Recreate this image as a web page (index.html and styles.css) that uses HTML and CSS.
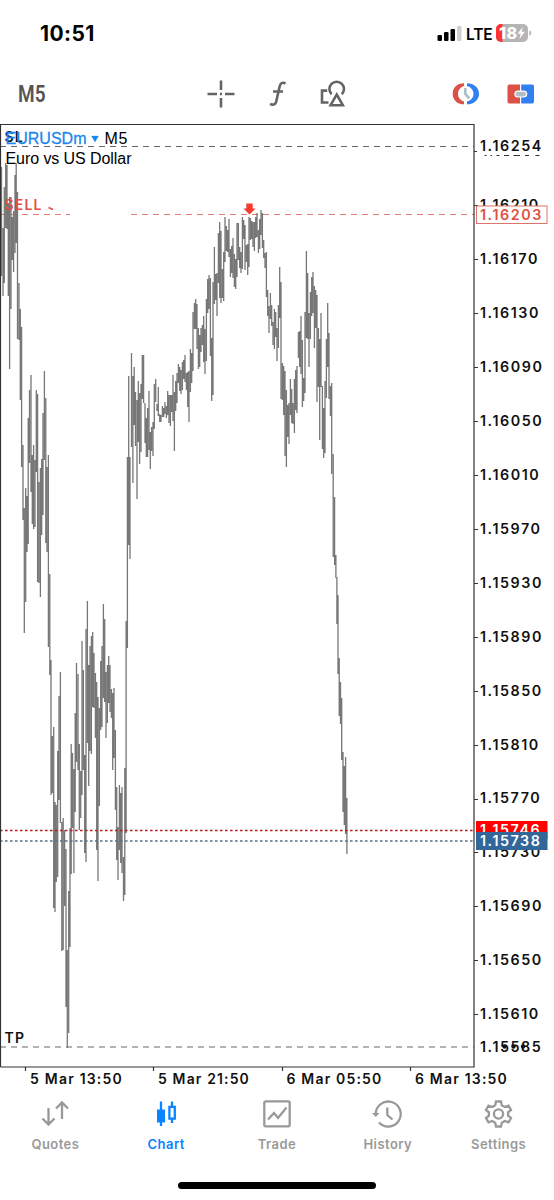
FILE: index.html
```
<!DOCTYPE html>
<html lang="en">
<head>
  <meta charset="UTF-8" />
  <meta name="viewport" content="width=device-width, initial-scale=1.0">
  <title>EURUSDm M5</title>
  <link rel="stylesheet" href="styles.css">
</head>
<body>
  <div class="status-bar">
    <span class="time">10:51</span>
    <div class="status-icons">
      <svg width="26" height="18" viewBox="0 0 26 18">
        <rect x="0.5" y="11" width="4.5" height="6" rx="1.2" />
        <rect x="7" y="8" width="4.5" height="9" rx="1.2" />
        <rect x="13.5" y="5" width="4.5" height="12" rx="1.2" />
        <rect x="20" y="2" width="4.5" height="15" rx="1.2" fill="#cfcfcf" />
      </svg>
      <span class="network">LTE</span>
      <svg width="36" height="18" viewBox="0 0 36 18">
        <rect width="32" height="18" rx="5" fill="#b5b5b5" />
        <path d="M5 0H6.5V18H5A5 5 0 0 1 0 13V5A5 5 0 0 1 5 0Z" fill="#ff3333" />
        <path d="M33.3 6.2Q35.4 7 35.4 9T33.3 11.8Z" fill="#b5b5b5" />
        <text class="battery-level" x="3" y="14.8" textLength="18">18</text>
        <path d="M26.8 3L21.5 9.8H24.8L23.4 15L29 7.8H25.6Z" fill="#fff" />
      </svg>
    </div>
  </div>

  <div class="toolbar">
    <span class="timeframe">M5</span>
    <svg class="tool crosshair" width="28" height="28" viewBox="0 0 28 28">
      <path d="M14 .5V10M14 18V27.5M.5 14H10M18 14H27.5M13 14H15" />
    </svg>
    <svg class="tool function" width="20" height="28" viewBox="0 0 20 28">
      <path d="M17.5 3.5C14 1.5 12.200 3.500 11.500 7L8.500 20.500C7.800 24.500 5.500 25.500 2 24M5 11.500H15" />
    </svg>
    <svg class="tool objects" width="28" height="28" viewBox="0 0 28 28">
      <path d="M12.600 14.200A7.300 7.300 0 1 1 22.800 14.200M8.200 10.600H3V22.500H9.500M17.700 14.500L23.800 25.200H11.600Z" />
    </svg>
    <svg class="tool session" width="28" height="24" viewBox="0 0 28 24">
      <path d="M12 1.2C5 1.2.7 5.5.7 11.7S5 22.3 12 22.3V19.6C8.5 18.5 6 15.5 6 11.8S8.5 5 12 4Z" fill="#dc5145" />
      <path d="M15 1.2C22 1.2 27 5.5 27 11.7S22 22.3 15 22.3V19.6C19 18.5 21.5 15.5 21.5 11.8S19 5 15 4Z" fill="#317ff0" />
      <path d="M13.3 6V12L17.3 16.3" fill="none" stroke="#aebdc7" stroke-width="2.6" />
    </svg>
    <svg class="tool order" width="28" height="20" viewBox="0 0 28 20">
      <path d="M2.3.5H13V6.5H11Q7.3 6.5 7.3 10T11 13.5H13V19.5H2.3Q.5 19.5.5 17.7V2.3Q.5.5 2.3.5Z" fill="#dc5145" />
      <path d="M14.2.5H25.2Q27 .5 27 2.3V17.7Q27 19.5 25.2 19.5H14.2V13.5H16.5Q20.3 13.5 20.3 10T16.5 6.5H14.2Z" fill="#317ff0" />
      <rect x="8.5" y="7.7" width="10.5" height="4.8" rx="2.4" fill="#aebdc7" />
    </svg>
  </div>

  <!-- user units are page pixels, the box starts at y=122 -->
  <svg class="chart" width="554" height="966" viewBox="0 122 554 966">
    <g class="level">
      <path d="M0 146.500H474M0 1047H474" />
      <path class="sell" d="M0 214.500H70M131 214.500H474" />
    </g>
    <path class="bars" d="M1.500 167V276M3 228V296M4.300 187V283M5.700 163V228M7 165V229M8.300 203V296M9.600 197V369M11 197V309M12.300 217V260M13.600 211V272M15 175V253M16.200 163V243M17.500 192V339M19 283V340M20.300 309V400M21.600 327V467M23 445V520M24.300 508V633M25.700 488V602M27 496V552M28.200 418V544M29.500 390V463M31 375V492M32.300 455V524M33.600 445V529M35 460V527M36.300 390V472M37.600 394V582M39 482V583M40.400 468V597M41.700 459V535M43 413V515M44.400 371V460M45.800 398V543M47 467V552M48.400 455V647M49.800 574V675M51 660V795M52.300 736V793M53.700 727V908M55 802V912M56.300 805V882M57.700 751V877M59 696V800M60.400 672V823M61.800 822V951M63.200 818V950M64.600 830V906M66 849V1007M67.300 950V1048M68.700 891V1033M70 828V947M71.200 744V874M72.500 753V828M73.900 769V873M75.200 713V812M76.500 663V762M78 674V770M79.300 744V830M80.700 771V818M82 641V795M83.400 670V770M84.700 755V853M86 629V862M87.400 601V743M88.700 665V786M90 646V751M91.400 636V754M92.700 632V707M94 653V708M95.400 673V738M96.700 682V850M98 697V881M99.400 708V806M100.700 661V730M102 646V727M103.400 604V698M104.700 619V702M106 672V738M107.400 665V723M108.700 656V703M110 665V712M111.400 689V718M112.700 693V770M114 688V758M115.400 730V810M116.700 787V860M118 827V880M119.400 785V850M120.700 793V863M122 787V873M123.500 857V901M124.800 768V895M126.100 621V833M127.400 457V648M128.700 376V545M130 457V559M131.500 353V447M132.900 376V483M134.200 367V425M135.500 392V446M137 400V499M138.300 381V442M139.600 393V464M141 384V452M142.300 355V399M143.600 355V403M145 403V443M146.300 418V457M147.600 408V457M149 391V450M150.300 432V469M151.600 427V451M153 422V456M154.300 384V429M155.700 379V402M157 404V411M158.300 387V416M159.700 414V422M161 415V422M162.400 406V417M163.700 408V417M165 402V414M166.400 406V418M167.700 391V415M169 395V423M170.400 395V426M171.700 395V412M173 375V421M174.400 392V451M175.700 381V411M177 373V403M178.400 364V383M179.700 367V391M181 370V394M182.400 362V390M183.700 360V379M185 355V382M186.400 373V390M187.700 372V407M189 371V422M190.400 349V392M191.700 353V383M193 312V371M194.400 303V329M195.700 299V329M197 304V349M198.400 328V369M199.700 335V367M201 328V352M202.400 325V345M203.700 316V362M205 329V374M206.400 299V361M207.700 279V313M209 275V309M210.400 278V356M211.700 338V401M213 282V395M214.400 247V304M215.700 274V300M217 273V316M218.400 233V283M219.700 222V298M221 231V303M222.400 269V298M223.700 252V301M225 217V262M226.400 226V251M227.700 230V252M229 219V257M230.400 249V277M231.700 246V273M233 238V278M234.400 254V287M235.700 259V289M237 223V277M238.400 223V260M239.700 247V268M241 252V273M242.400 217V269M243.700 220V239M245 225V270M246.400 245V262M247.700 244V275M249 217V267M250.400 218V240M251.700 221V239M253 222V247M254.400 222V251M255.700 217V238M257 213V237M258.400 230V253M259.700 219V249M261 210V235M262.400 213V248M263.700 240V258M265 253V268M266.400 252V297M267.700 290V316M269 306V333M270.400 293V319M271.700 305V326M273 322V345M274.400 309V349M275.700 312V337M277 328V361M278.400 305V348M279.700 267V318M281 282V399M282.400 363V400M283.700 366V415M285 371V456M286.400 390V467M287.700 405V437M289 403V444M290.400 379V415M291.700 389V423M293 403V424M294.400 379V433M295.700 370V410M297 366V413M298.400 332V358M299.700 331V367M301 316V374M302.400 340V407M303.700 378V401M305 312V393M306.400 251V338M307.700 273V339M309 313V367M310.400 292V339M311.700 277V316M313 272V313M314.400 286V348M315.700 290V328M317 295V402M318.400 328V387M319.700 339V440M321 313V387M322.400 386V449M323.700 408V458M325 381V453M326.400 339V398M327.700 303V367M329 333V399M330.400 386V416M331.700 383V474M333.200 454V557M334.600 497V565M335.900 555V578M336.900 577V624M338 595V674M339.200 658V716M340.500 682V724M341.700 698V760M343 752V812M344.300 766V825M345.600 757V834M346.900 798V854" />
    <path class="last ask" d="M0 830.500H474" />
    <path class="last bid" d="M0 841H474" />

    <path class="frame" d="M.5 1067V124.500H474V1067H.500" />
    <path class="ticks" d="M474 151.500h3M474 205.500h4M474 259.500h4M474 313.500h4M474 367.500h4M474 421.500h4M474 475.500h4M474 529.500h4M474 583.500h4M474 637.500h4M474 691.500h4M474 745.500h4M474 799.500h4M474 852.500h4M474 906.500h4M474 960.500h4M474 1014.500h4M25.500 1067v4M153.500 1067v4M282.500 1067v4M410.500 1067v4" />

    <path class="arrow" d="M246.300 203.500H252.700V208.500H255.500L249.500 214.500L243.500 208.500H246.300Z" />

    <g class="label">
      <text x="4.500" y="142">SL</text>
      <text x="4.500" y="1042.500">TP</text>
      <text class="sell" x="4.500" y="210">SELL</text>
      <path class="sell-rest" d="M48.500 207.500L53 209.500" />
    </g>
    <g class="title">
      <text class="symbol" x="5.500" y="143.500" textLength="81">EURUSDm</text>
      <path class="symbol" d="M91.500 136H98.500L95 142Z" />
      <text x="104.500" y="143.500" textLength="23">M5</text>
      <text x="5.500" y="163.500" textLength="126">Euro vs US Dollar</text>
    </g>

    <g class="label price">
      <text x="480" y="210">1.16210</text>
      <text x="480" y="264">1.16170</text>
      <text x="480" y="318">1.16130</text>
      <text x="480" y="372">1.16090</text>
      <text x="480" y="426">1.16050</text>
      <text x="480" y="480">1.16010</text>
      <text x="480" y="534">1.15970</text>
      <text x="480" y="588">1.15930</text>
      <text x="480" y="642">1.15890</text>
      <text x="480" y="696">1.15850</text>
      <text x="480" y="750">1.15810</text>
      <text x="480" y="803">1.15770</text>
      <text x="480" y="857">1.15730</text>
      <text x="480" y="911">1.15690</text>
      <text x="480" y="965">1.15650</text>
      <text x="480" y="1019">1.15610</text>
      <text x="480" y="1052">1.15585</text>
      <circle cx="504.500" cy="1046.500" r="2.200" />
      <circle cx="513.500" cy="1046.500" r="2.200" />
      <circle cx="523" cy="1046.500" r="2.200" />
      <text x="480" y="151">1.16254</text>
      <path class="covered" d="M484.500 155.500h2M490.500 155.500h1.500M496.500 155.500h3M504 155.500h5M513.500 155.500h6.500M525 155.500h4M535.500 155.500h4" />

      <rect class="sell-box" x="476.500" y="206" width="70.500" height="17.500" />
      <text class="sell" x="480" y="219.500">1.16203</text>
      <rect class="ask-box" x="476" y="821" width="71.500" height="18" />
      <text class="on-box" x="480" y="835">1.15746</text>
      <rect class="bid-box" x="476" y="832" width="71.500" height="18" />
      <text class="on-box" x="480" y="846">1.15738</text>
    </g>

    <g class="label date">
      <text x="30" y="1083.500" textLength="93">5 Mar 13:50</text>
      <text x="158" y="1083.500" textLength="92">5 Mar 21:50</text>
      <text x="286.500" y="1083.500" textLength="96">6 Mar 05:50</text>
      <text x="415" y="1083.500" textLength="93">6 Mar 13:50</text>
    </g>
  </svg>

  <nav class="tab-bar">
    <a class="tab">
      <svg width="30" height="30" viewBox="0 0 30 30">
        <path d="M8.500 8V24M2.500 18.500L8.500 24.500L14.500 18.500M22 19V3M16 8.500L22 2.500L28 8.500" />
      </svg>
      <span>Quotes</span>
    </a>
    <a class="tab active">
      <svg width="30" height="30" viewBox="0 0 30 30">
        <path d="M10 1.500V26M21 1.500V7M21 18V23" />
        <rect class="solid" x="6" y="9.500" width="8" height="13" />
        <rect x="18.400" y="6.900" width="5.400" height="11.700" />
      </svg>
      <span>Chart</span>
    </a>
    <a class="tab">
      <svg width="30" height="30" viewBox="0 0 30 30">
        <rect x="2.300" y="1.300" width="25.400" height="25" rx="1.500" />
        <path d="M6 19.500L12 13L16 18L24.500 7.500" />
      </svg>
      <span>Trade</span>
    </a>
    <a class="tab">
      <svg width="30" height="30" viewBox="0 0 30 30">
        <path d="M2.700 14A12.500 12.500 0 1 1 6 22.500M14.300 7.500V15L19.500 19.500" />
        <path class="solid" d="M-1 13L6.500 13L2.700 17Z" />
      </svg>
      <span>History</span>
    </a>
    <a class="tab">
      <svg width="30" height="30" viewBox="0 0 30 30">
        <path d="M12 1.500H17L17.800 5.300L20.800 7L24.500 5.700L27 10L24.100 12.400V15.600L27 18L24.500 22.300L20.800 21L17.800 22.700L17 26.500H12L11.200 22.700L8.200 21L4.500 22.300L2 18L4.900 15.600V12.400L2 10L4.500 5.700L8.200 7L11.200 5.300Z" />
        <circle cx="14.500" cy="14" r="4.600" />
      </svg>
      <span>Settings</span>
    </a>
  </nav>
  <div class="home-indicator"></div>
</body>
</html>
```
FILE: styles.css
```
:root {
  --blue: #0a84ff;
  --red: #e0503f;
  --gray: #999;
  --icon: #646464;
}

* {
  box-sizing: border-box;
}

body {
  margin: 0;
  width: 554px;
  height: 1200px;
  background: #fff;
  color: #000;
  font-family: Inter, "Liberation Sans", sans-serif;
  overflow: hidden;
}

svg {
  display: block;
  flex: none;
  overflow: visible;
}

.status-bar {
  display: flex;
  justify-content: space-between;
  align-items: center;
  height: 66px;
  padding: 0 22px 0 40px;
}

.time {
  font-size: 21px;
  font-weight: 700;
  letter-spacing: 0.4px;
}

.status-icons {
  display: flex;
  align-items: center;
}

.network {
  margin: 2px 5px 0 3px;
  font-size: 15.5px;
  font-weight: 600;
  width: 25px;
  letter-spacing: -0.2px;
}

.battery-level {
  font-size: 16px;
  font-weight: 800;
  fill: #fff;
}

.toolbar {
  display: flex;
  align-items: center;
  height: 56px;
  padding-left: 18px;
}

.timeframe {
  width: 189px;
  font-family: Roboto, sans-serif;
  font-size: 23.5px;
  font-weight: 600;
  color: #555;
  transform: scaleX(0.81);
  transform-origin: left;
}

.crosshair,
.function,
.objects {
  fill: none;
  stroke: var(--icon);
  stroke-width: 2.6;
}

.function {
  margin-left: 33px;
}

.objects {
  margin-left: 31px;
}

.session {
  margin-left: 105px;
}

.order {
  margin-left: 27px;
}

.level {
  fill: none;
  stroke: #666;
  stroke-width: 1;
  stroke-dasharray: 6 5;
}

.level .sell {
  stroke: #df7b73;
}

.bars {
  fill: none;
  stroke: #777;
  stroke-width: 1.3;
}

.last {
  fill: none;
  stroke-width: 1.5;
  stroke-dasharray: 2.6 2.4;
}

.ask {
  stroke: #b81f27;
}

.bid {
  stroke: #5d7186;
}

.frame,
.ticks {
  fill: none;
  stroke: #333;
  stroke-width: 1.2;
}

.arrow {
  fill: #f43d2f;
}

.label {
  font-size: 14px;
  font-weight: 600;
  letter-spacing: 1.2px;
  fill: #111;
}

.price {
  font-size: 14.3px;
  letter-spacing: 1.55px;
}

.label .sell {
  fill: var(--red);
}

.sell-rest {
  stroke: var(--red);
  stroke-width: 1.5;
}

.title {
  font-family: "Liberation Sans", Arial, sans-serif;
  font-size: 16px;
}

.symbol {
  fill: #1b87ee;
  stroke: #1b87ee;
  stroke-width: 0.3;
}

.covered {
  stroke: #333;
  stroke-width: 1;
}

.sell-box {
  fill: #fff;
  stroke: #dd7469;
}

.ask-box {
  fill: #f00;
}

.bid-box {
  fill: #336699;
}

.label .on-box {
  fill: #fff;
}

.tab-bar {
  display: flex;
  height: 94px;
  padding-top: 12px;
}

.tab {
  flex: 1;
  display: flex;
  flex-direction: column;
  align-items: center;
  gap: 6px;
  font-size: 13px;
  font-weight: 600;
  letter-spacing: 0.45px;
  color: var(--gray);
}

.tab svg {
  fill: none;
  stroke: currentColor;
  stroke-width: 2.3;
}

.tab .solid {
  fill: currentColor;
  stroke: none;
}

.active {
  color: var(--blue);
}

.home-indicator {
  width: 198px;
  height: 7px;
  margin: 0 auto;
  border-radius: 4px;
  background: #000;
}
```
